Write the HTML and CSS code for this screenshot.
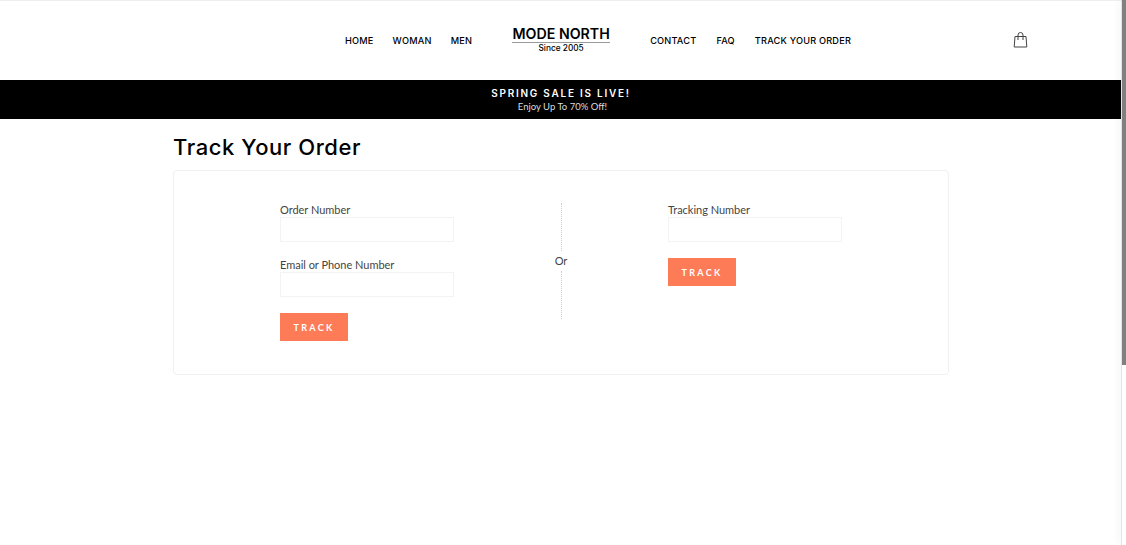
FILE: index.html
```html
<!DOCTYPE html>
<html>
<head>
  <title>Track Your Order</title>
  <link rel="stylesheet" href="styles.css">
</head>
<body>
  <div class="scroll-track"><div class="scroll-thumb"></div></div>
  <header class="site-header">
    <nav class="nav nav-left">
      <a href="#">HOME</a>
      <a href="#">WOMAN</a>
      <a href="#">MEN</a>
    </nav>
    <a class="logo" href="#">
      <span class="logo-name">MODE NORTH</span>
      <span class="logo-since">Since 2005</span>
    </a>
    <nav class="nav nav-right">
      <a href="#">CONTACT</a>
      <a href="#">FAQ</a>
      <a href="#">TRACK YOUR ORDER</a>
    </nav>
    <a class="cart" href="#">
      <svg width="15" height="16" viewBox="0 0 15 16" fill="none" stroke="#444" stroke-width="1">
        <path d="M2 4.500h11l.8 10.500H1.200z"/>
        <path d="M5 8V3a2.500 2.500 0 0 1 5 0v5"/>
      </svg>
    </a>
  </header>

  <div class="promo">
    <div class="promo-title">SPRING SALE IS LIVE!</div>
    <div class="promo-sub">Enjoy Up To 70% Off!</div>
  </div>

  <main class="page">
    <h1>Track Your Order</h1>
    <div class="card">
      <form class="track-col">
        <label for="order">Order Number</label>
        <input type="text" id="order">
        <label for="contact">Email or Phone Number</label>
        <input type="text" id="contact">
        <button class="button" type="button">TRACK</button>
      </form>
      <div class="divider">
        <span class="dots"></span>
        <span class="or">Or</span>
        <span class="dots"></span>
      </div>
      <form class="track-col">
        <label for="tracking">Tracking Number</label>
        <input type="text" id="tracking">
        <button class="button" type="button">TRACK</button>
      </form>
    </div>
  </main>
</body>
</html>
```

FILE: styles.css
```css
body {
  font-family: "Lato", sans-serif;
  margin: 0;
  padding-right: 4px;
  height: 545px;
  overflow: hidden;
  background: #fff;
  color: #000;
}

a {
  color: inherit;
  text-decoration: none;
}

.scroll-track {
  position: fixed;
  top: 0;
  right: 0;
  width: 4px;
  height: 545px;
  background: #fff;
  border-left: 1px solid #e4e4e4;
  box-shadow: -3px 0 6px rgba(0, 0, 0, 0.04);
}

.scroll-thumb {
  height: 365px;
  background: #808080;
}

.site-header {
  display: flex;
  align-items: center;
  box-sizing: border-box;
  height: 80px;
  border-top: 1px solid #eee;
  padding: 0 0 1px 345px;
}

.nav {
  display: flex;
  gap: 20px;
  font-family: "Inter", sans-serif;
  font-size: 9.200px;
  font-weight: 500;
  letter-spacing: 0.2px;
}

.nav-left {
  gap: 19px;
}

.logo {
  display: flex;
  flex-direction: column;
  align-items: center;
  width: 98px;
  margin: 0 40px;
}

.logo-name {
  font-family: "Inter", sans-serif;
  font-size: 14.200px;
  font-weight: 600;
  line-height: 16px;
  width: 100%;
  text-align: center;
  border-bottom: 1px solid #999;
  white-space: nowrap;
}

.logo-since {
  font-family: "Inter", sans-serif;
  font-size: 8.300px;
  font-weight: 500;
  line-height: 11px;
}

.cart {
  display: flex;
  margin-left: auto;
  margin-right: 94px;
}

.promo {
  background: #000;
  color: #fff;
  height: 39px;
  text-align: center;
  box-sizing: border-box;
  padding-top: 7px;
}

.promo-title {
  font-family: "Inter", sans-serif;
  font-size: 10px;
  font-weight: 600;
  letter-spacing: 1.750px;
  line-height: 13px;
}

.promo-sub {
  font-size: 9.500px;
  line-height: 13px;
  padding-left: 3px;
  color: #ddd;
}

.page {
  width: 776px;
  margin-left: 173px;
}

h1 {
  font-family: "Inter", sans-serif;
  font-size: 22px;
  font-weight: 500;
  letter-spacing: 0.550px;
  line-height: 28px;
  margin: 14px 0 9px;
}

.card {
  display: flex;
  box-sizing: border-box;
  height: 205px;
  border: 1px solid #f0f0f0;
  border-radius: 4px;
  padding: 32px 0 0 106px;
}

.track-col {
  display: flex;
  flex-direction: column;
  align-items: flex-start;
  width: 174px;
}

label {
  font-size: 11px;
  letter-spacing: -0.020px;
  line-height: 11px;
  margin: 1px 0 2px;
  color: #444;
}

input[type="text"] {
  width: 174px;
  height: 25px;
  box-sizing: border-box;
  border: 1px solid #f3f3f3;
  margin-bottom: 16px;
  padding: 0 8px;
  outline: none;
}

.button {
  width: 68px;
  height: 28px;
  border: none;
  background: #fd7b56;
  color: #fff;
  font-family: "Lato", sans-serif;
  font-size: 9px;
  font-weight: 700;
  letter-spacing: 2.300px;
  cursor: pointer;
}

.divider {
  display: flex;
  flex-direction: column;
  align-items: center;
  width: 40px;
  height: 116px;
  margin: 0 87px;
  font-size: 11px;
}

.dots {
  flex: 1;
  border-left: 1px dotted #ccc;
}

.or {
  line-height: 14px;
  padding: 3px 0;
  color: #444;
}
```
